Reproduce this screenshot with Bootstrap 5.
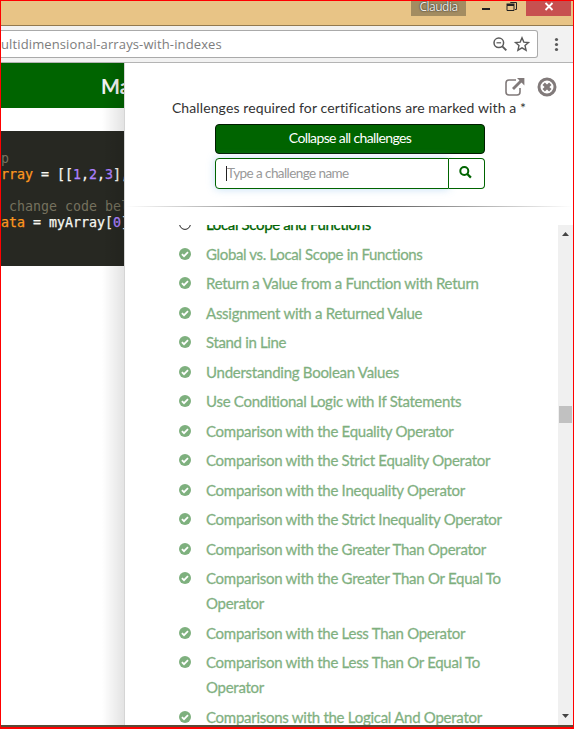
<!DOCTYPE html>
<html lang="en">
<head>
<meta charset="utf-8">
<meta name="viewport" content="width=device-width, initial-scale=1">
<title>Challenge map</title>
<link href="https://cdn.jsdelivr.net/npm/bootstrap@5.3.0/dist/css/bootstrap.min.css" rel="stylesheet">
<style>
html, body { height: 729px; overflow: hidden; }
body { font-family: Lato, sans-serif; font-size: 15px; color: #333; }
.frame { width: 574px; height: 729px; border: 1px solid #f00; border-bottom-width: 2px; overflow: hidden; }
.titlebar { height: 25px; background: #e8c486; border-bottom: 1px solid #92794f; }
.profile { width: 55px; height: 15px; margin-right: 9px; background: #a38c61; color: #f4f0e8; font: 12px/11px "Open Sans", sans-serif; letter-spacing: -.5px; text-shadow: 0 0 2px #333, 0 0 1px #333; }
.win { height: 15px; }
.win-close { width: 45px; background: #c75050; }
.win-edge { width: 2px; }
.toolbar { height: 37px; background: #f2f2f2; border-bottom: 1px solid #b4b4b4; }
.address { width: 537px; height: 28px; margin-top: 4px; border: 1px solid #aaa; border-left: 0; border-radius: 0 3px 3px 0; background: #fff; color: #7d7d7d; font: 13px/26px "Open Sans", sans-serif; }
.address-text { letter-spacing: .12px; }
.page { height: 662px; }
.left-pane { width: 123px; }
.left-pane::after { content: ""; position: absolute; inset: 0 0 0 auto; width: 22px; background: linear-gradient(90deg, rgba(0,0,0,0), rgba(0,0,0,.11)); }
.site-nav { height: 45px; background: #006400; color: #f4f4f4; font-size: 20px; font-weight: 700; line-height: 47px; padding-left: 100px; }
.editor { height: 135px; margin-top: 23px; padding-top: 20px; background: #272822; color: #f8f8f2; font: 13.29px/16px "DejaVu Sans Mono", monospace; white-space: pre; -webkit-text-stroke: .25px; }
.cm { color: #75715e; -webkit-text-stroke: 0; } .df { color: #fd971f; } .nu { color: #ae81ff; }
.map-pane { border-left: 1px solid #d5d5d5; background: #fff; min-width: 0; }
.map-head { height: 162px; padding-top: 13px; }
.map-tools { height: 22px; padding-right: 16px; gap: 12px; }
.hint { height: 26px; line-height: 20px; font-size: 14px; letter-spacing: .11px; white-space: nowrap; }
.map-controls { width: 270px; margin-left: 90px; }
.btn-collapse { height: 30px; padding: 0; border: 1px solid #001c00; border-radius: 4px; background: #006400; color: #fff; font-size: 14px; line-height: 25px; letter-spacing: -.62px; }
.btn-collapse span { display: block; height: 28px; line-height: 26px; }
.search-group { height: 31px; margin-top: 4px; }
.search-group .form-control { height: 31px; padding: 0 0 1px 10px; border: 1px solid #006400; border-radius: 4px 0 0 4px; font-size: 13.5px; line-height: 28px; letter-spacing: -.58px; color: #999; box-shadow: 0 0 8px rgba(102,175,233,.4); }
.caret { width: 1px; height: 15px; background: #222; }
.search-btn { width: 36px; padding: 0 2px 3px 0; border: 1px solid #006400; border-left: 0; border-radius: 0 4px 4px 0; background: #fff; }
.rule { height: 1px; margin-top: 17px; background: linear-gradient(90deg, rgba(0,0,0,0), rgba(0,0,0,.75), rgba(0,0,0,0)); }
.map-scroll { height: 500px; overflow: hidden; }
.challenges { width: 433px; padding-left: 54px; margin-top: -12.6px; color: #006400; letter-spacing: -.27px; -webkit-text-stroke: .3px #006400; }
.challenges li { margin-bottom: 4.5px; line-height: 25px; }
.challenges li.done { opacity: .5; }
.challenges li.tight { letter-spacing: -.35px; }
.tick { width: 12px; height: 12px; margin: 6px 15px 0 0; flex: none; }
.label-text { width: 305px; }
.scrollbar { width: 15px; background: #f0f0f0; }
.thumb { width: 13px; height: 17px; margin-top: 169px; background: #c1c1c1; }
.footer-strip { height: 2px; background: #5a4b38; }
</style>
<script src="https://cdn.jsdelivr.net/npm/bootstrap@5.3.0/dist/js/bootstrap.bundle.min.js"></script>
</head>
<body>
<svg class="d-none" xmlns="http://www.w3.org/2000/svg">
  <symbol id="check" viewBox="0 0 12 12"><circle cx="6" cy="6" r="6" fill="#006400"/><path d="M2.900 6.200 5 8.200 9 4.200" fill="none" stroke="#fff" stroke-width="1.8"/></symbol>
</svg>
<div class="frame d-flex flex-column">
  <header class="titlebar d-flex justify-content-end align-items-start">
    <div class="profile text-center">Claudia</div>
    <svg class="win" width="51" height="15" viewBox="0 0 51 15"><path d="M7 8h8" stroke="#222" stroke-width="2"/><path d="M35.5 2v-.5h6v7H40M32 4.500h7v5h-7z" fill="none" stroke="#222"/><path d="M31.500 3.500h8" stroke="#222" stroke-width="2"/></svg>
    <div class="win win-close d-flex justify-content-center"><svg width="10" height="12" viewBox="0 0 10 12"><path d="m1.500 2 7 7m0-7-7 7" stroke="#fff" stroke-width="1.8"/></svg></div>
    <div class="win-edge"></div>
  </header>
  <div class="toolbar d-flex align-items-start">
    <div class="address d-flex align-items-center">
      <span class="address-text">ultidimensional-arrays-with-indexes</span>
      <svg class="ms-auto me-2" width="14" height="14" viewBox="0 0 14 14" fill="none" stroke="#5a5a5a"><circle cx="5.8" cy="5.8" r="4.8" stroke-width="1.5"/><path d="M3.500 5.800h4.600" stroke-width="1.2"/><path d="m9.300 9.300 4 4" stroke-width="1.9"/></svg>
      <svg class="me-2" width="14" height="14" viewBox="0 0 14 14" overflow="visible"><path d="m7 .8 1.800 4.300 4.700.4-3.500 3.100 1.100 4.600L7 10.800l-4.100 2.400L4 8.600.500 5.500l4.700-.4z" fill="none" stroke="#5a5a5a" stroke-width="1.4"/></svg>
    </div>
    <svg width="34" height="36" viewBox="0 0 34 36" fill="#5a5a5a"><circle cx="18.500" cy="13.500" r="1.600"/><circle cx="18.500" cy="18.500" r="1.600"/><circle cx="18.500" cy="23.500" r="1.600"/></svg>
  </div>
  <main class="page d-flex">
    <section class="left-pane position-relative flex-shrink-0 overflow-hidden">
      <div class="site-nav text-nowrap overflow-hidden">Ma</div>
      <div class="editor overflow-hidden"><span class="cm">p</span>
<span class="df">rray</span> = [[<span class="nu">1</span>,<span class="nu">2</span>,<span class="nu">3</span>],

<span class="cm"> change code bel</span>
<span class="df">ata</span> = myArray[<span class="nu">0</span>]</div>
    </section>
    <aside class="map-pane flex-grow-1">
      <div class="map-head">
        <div class="map-tools d-flex justify-content-end align-items-center">
          <svg width="20" height="20" viewBox="0 0 20 20" fill="none" stroke="#817a7a"><path d="M11 3H4a3 3 0 0 0-3 3v9a3 3 0 0 0 3 3h8a3 3 0 0 0 3-3v-4" stroke-width="1.6"/><path d="m8 12 8-8" stroke-width="2.8"/><path d="M12 1h7.400v7.400z" fill="#817a7a" stroke="none"/></svg>
          <svg width="20" height="20" viewBox="0 0 20 20" fill="none" stroke="#817a7a"><circle cx="10" cy="10" r="8" stroke-width="3"/><path d="m6.700 6.700 6.600 6.600m0-6.600-6.600 6.600" stroke-width="3.4"/></svg>
        </div>
        <p class="hint text-center mb-0">Challenges required for certifications are marked with a *</p>
        <div class="map-controls">
          <button class="btn btn-collapse d-block w-100" type="button"><span>Collapse all challenges</span></button>
          <div class="search-group d-flex">
            <div class="form-control d-flex align-items-center"><span class="caret"></span>Type a challenge name</div>
            <div class="search-btn d-flex flex-shrink-0 justify-content-center align-items-center"><svg width="13" height="13" viewBox="0 0 13 13" fill="none" stroke="#006400"><circle cx="5.300" cy="5" r="4" stroke-width="2"/><path d="m8.300 8 3.600 3.600" stroke-width="2.300"/></svg></div>
          </div>
        </div>
        <div class="rule"></div>
      </div>
      <div class="map-scroll d-flex">
        <ul class="challenges list-unstyled flex-shrink-0 mb-0">
          <li class="d-flex tight"><svg class="tick" viewBox="0 0 12 12"><circle cx="6" cy="6" r="5.400" fill="none" stroke="#222"/></svg><span class="label-text">Local Scope and Functions</span></li>
          <li class="d-flex done tight"><svg class="tick"><use href="#check"/></svg><span class="label-text">Global vs. Local Scope in Functions</span></li>
          <li class="d-flex done"><svg class="tick"><use href="#check"/></svg><span class="label-text">Return a Value from a Function with Return</span></li>
          <li class="d-flex done"><svg class="tick"><use href="#check"/></svg><span class="label-text">Assignment with a Returned Value</span></li>
          <li class="d-flex done tight"><svg class="tick"><use href="#check"/></svg><span class="label-text">Stand in Line</span></li>
          <li class="d-flex done"><svg class="tick"><use href="#check"/></svg><span class="label-text">Understanding Boolean Values</span></li>
          <li class="d-flex done"><svg class="tick"><use href="#check"/></svg><span class="label-text">Use Conditional Logic with If Statements</span></li>
          <li class="d-flex done"><svg class="tick"><use href="#check"/></svg><span class="label-text">Comparison with the Equality Operator</span></li>
          <li class="d-flex done"><svg class="tick"><use href="#check"/></svg><span class="label-text">Comparison with the Strict Equality Operator</span></li>
          <li class="d-flex done"><svg class="tick"><use href="#check"/></svg><span class="label-text">Comparison with the Inequality Operator</span></li>
          <li class="d-flex done"><svg class="tick"><use href="#check"/></svg><span class="label-text">Comparison with the Strict Inequality Operator</span></li>
          <li class="d-flex done"><svg class="tick"><use href="#check"/></svg><span class="label-text">Comparison with the Greater Than Operator</span></li>
          <li class="d-flex done"><svg class="tick"><use href="#check"/></svg><span class="label-text">Comparison with the Greater Than Or Equal To<br>Operator</span></li>
          <li class="d-flex done"><svg class="tick"><use href="#check"/></svg><span class="label-text">Comparison with the Less Than Operator</span></li>
          <li class="d-flex done"><svg class="tick"><use href="#check"/></svg><span class="label-text">Comparison with the Less Than Or Equal To<br>Operator</span></li>
          <li class="d-flex done"><svg class="tick"><use href="#check"/></svg><span class="label-text">Comparisons with the Logical And Operator</span></li>
        </ul>
        <div class="scrollbar d-flex flex-column align-items-center">
          <svg width="15" height="8" viewBox="0 0 15 8" class="mt-1 flex-shrink-0"><path d="M4 7 7.500 3 11 7z" fill="#444"/></svg>
          <div class="thumb flex-shrink-0"></div>
          <svg width="15" height="8" viewBox="0 0 15 8" class="mt-auto mb-1 flex-shrink-0"><path d="M4 1h7L7.500 5z" fill="#444"/></svg>
        </div>
      </div>
    </aside>
  </main>
  <div class="footer-strip"></div>
</div>
</body>
</html>
